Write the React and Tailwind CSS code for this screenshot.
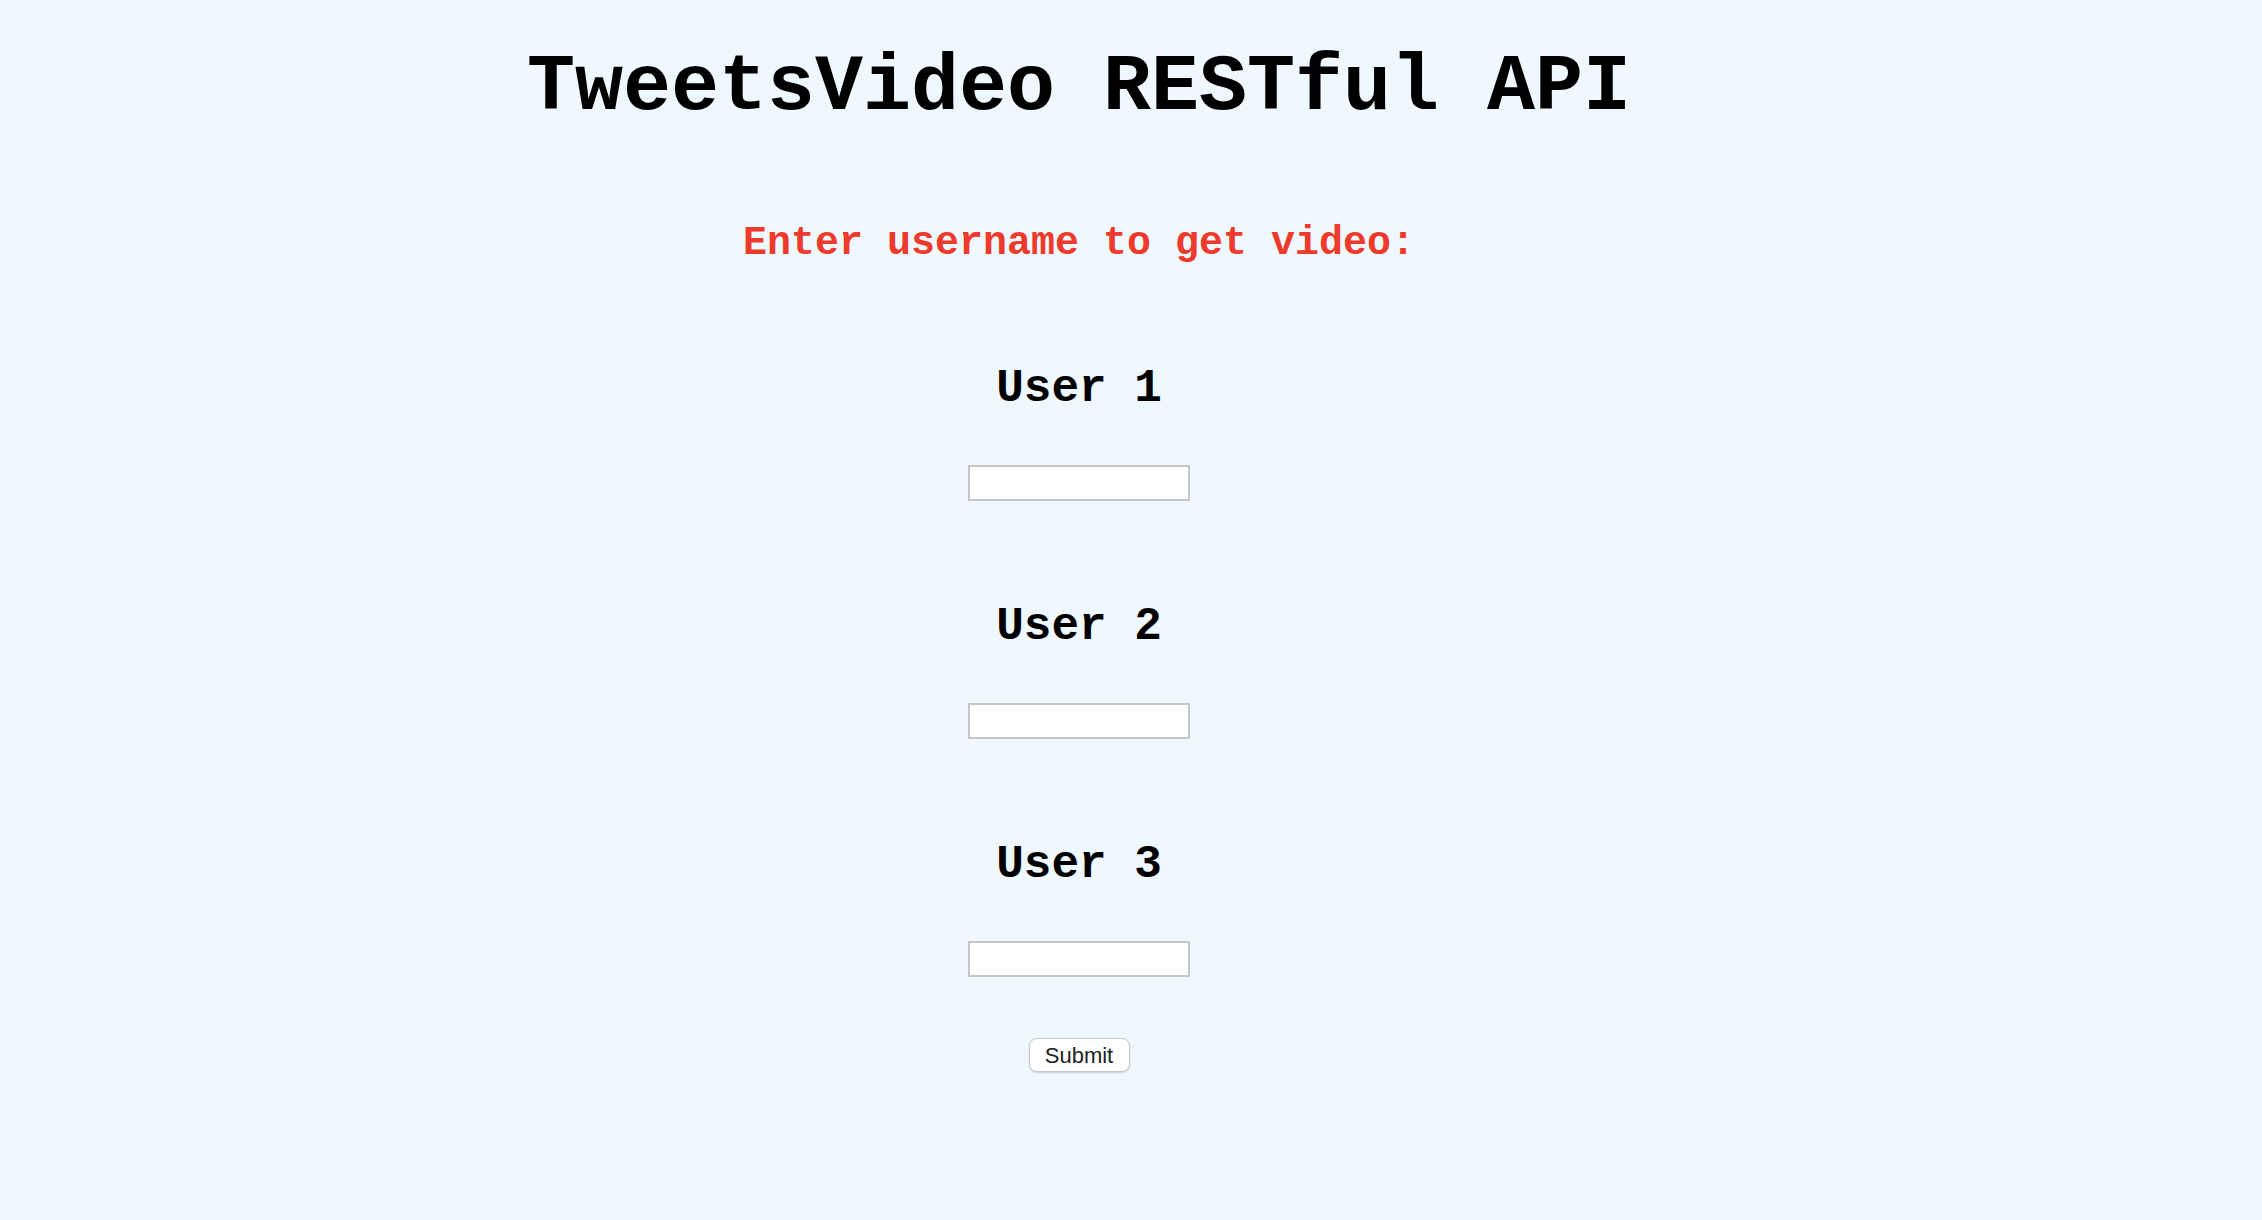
import React, { useState } from 'react'

const mono = { fontFamily: '"Liberation Mono", "Courier New", monospace' }

const UserField = ({ label, value, onChange }) => (
  <div className="flex flex-col items-center">
    <h3 className="text-[46px] leading-none font-bold text-black" style={mono}>
      {label}
    </h3>
    <input
      type="text"
      value={value}
      onChange={onChange}
      className="mt-[53px] w-[222px] h-[36px] bg-white border-2 border-[#c6c6c6] outline-none px-2 text-[22px]"
    />
  </div>
)

const App = () => {
  const [users, setUsers] = useState(['', '', ''])

  const update = (i) => ({ target }) => {
    const next = [...users]
    next[i] = target.value
    setUsers(next)
  }

  return (
    <div className="min-h-[1220px] w-full bg-[#f0f8ff]">
      <div className="w-[2158px] flex flex-col items-center pt-[48px]">
        <h1 className="text-[80px] leading-none font-bold text-black" style={mono}>
          TweetsVideo RESTful API
        </h1>
        <h2 className="mt-[96px] text-[40px] leading-none font-bold text-[#ee3a2b]" style={mono}>
          Enter username to get video:
        </h2>
        <form className="flex flex-col items-center gap-[103px] mt-[102px]" onSubmit={(e) => e.preventDefault()}>
          {users.map((u, i) => (
            <UserField key={`user${i}`} label={`User ${i + 1}`} value={u} onChange={update(i)} />
          ))}
        </form>
        <button
          type="button"
          className="mt-[61px] w-[101px] h-[34px] bg-white border border-[#c8c8c8] rounded-[8px] shadow-[0_1px_2px_rgba(0,0,0,0.15)] text-[22px] text-[#222]"
          style={{ fontFamily: '"Liberation Sans", Arial, sans-serif' }}
        >
          Submit
        </button>
      </div>
    </div>
  )
}

export default App
